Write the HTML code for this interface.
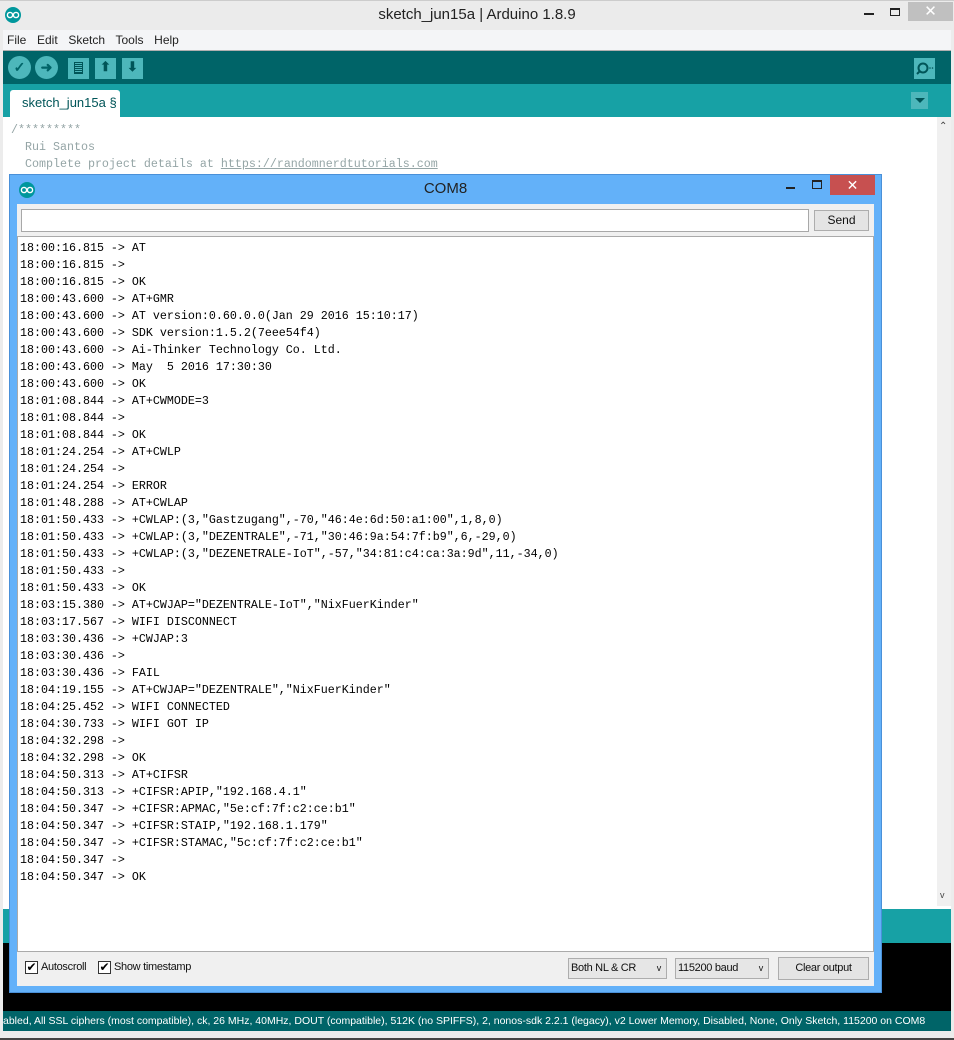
<!DOCTYPE html>
<html><head><meta charset="utf-8"><style>
*{margin:0;padding:0;box-sizing:border-box}
body{width:954px;height:1040px;overflow:hidden;background:#fff;font-family:"Liberation Sans",sans-serif;position:relative}
.abs{position:absolute}
.mono{font-family:"Liberation Mono",monospace}
</style></head><body>
<div class="abs" style="left:0;top:0;width:954px;height:30px;background:#ebebeb;border-top:1px solid #ccc"></div>
<svg class="abs" style="left:5px;top:7px" width="16" height="16"><circle cx="8" cy="8" r="8" fill="#00979c"/><circle cx="5" cy="8" r="2.6" fill="none" stroke="#fff" stroke-width="1.4"/><circle cx="11" cy="8" r="2.6" fill="none" stroke="#fff" stroke-width="1.4"/></svg>
<div class="abs" style="left:0;width:954px;top:6px;text-align:center;font-size:15px;color:#222">sketch_jun15a | Arduino 1.8.9</div>
<div class="abs" style="left:864px;top:13px;width:10px;height:2px;background:#222"></div>
<div class="abs" style="left:890px;top:8px;width:10px;height:8px;border:1px solid #222;border-top-width:2px"></div>
<div class="abs" style="left:908px;top:2px;width:45px;height:19px;background:#c0c0c0;color:#fff;text-align:center;font-size:15px;line-height:19px">✕</div>
<div class="abs" style="left:3px;top:30px;width:948px;height:21px;background:#f4f5f7;border-bottom:1px solid #b0b0b0;font-size:12px;color:#222;line-height:21px;padding-left:4px;word-spacing:2px">File&nbsp; Edit&nbsp; Sketch&nbsp; Tools&nbsp; Help</div>
<div class="abs" style="left:3px;top:51px;width:948px;height:33px;background:#006468"></div>
<div class="abs" style="left:8px;top:56px;width:23px;height:23px;border-radius:50%;background:#4db7bb;color:#006468;font-size:14px;text-align:center;line-height:23px;font-weight:bold">✓</div>
<div class="abs" style="left:35px;top:56px;width:23px;height:23px;border-radius:50%;background:#4db7bb;color:#006468;font-size:14px;text-align:center;line-height:22px;font-weight:bold">➜</div>
<div class="abs" style="left:68px;top:58px;width:21px;height:21px;background:#4db7bb"><div style="position:absolute;left:6px;top:4px;width:9px;height:12px;border:1px solid #005558;background:repeating-linear-gradient(#4db7bb 0 1px,#005558 1px 2px)"></div></div>
<div class="abs" style="left:95px;top:58px;width:21px;height:21px;background:#4db7bb;color:#005558;text-align:center;font-size:13px;line-height:18px;font-weight:bold">⬆</div>
<div class="abs" style="left:122px;top:58px;width:21px;height:21px;background:#4db7bb;color:#005558;text-align:center;font-size:13px;line-height:18px;font-weight:bold">⬇</div>
<div class="abs" style="left:914px;top:58px;width:21px;height:21px;background:#4db7bb"><svg width="21" height="21"><circle cx="9" cy="10" r="4.5" fill="none" stroke="#005558" stroke-width="2"/><line x1="6" y1="13" x2="3" y2="16" stroke="#005558" stroke-width="2"/><circle cx="16" cy="10" r=".8" fill="#005558"/><circle cx="18.5" cy="10" r=".8" fill="#005558"/></svg></div>
<div class="abs" style="left:3px;top:84px;width:948px;height:33px;background:#17a1a5"></div>
<div class="abs" style="left:10px;top:90px;width:110px;height:27px;background:#fff;border-radius:3px 3px 0 0;color:#005558;font-size:13px;line-height:25px;padding-left:12px">sketch_jun15a §</div>
<div class="abs" style="left:911px;top:92px;width:17px;height:17px;background:#4db7bb"><div style="position:absolute;left:4px;top:6px;border-left:5px solid transparent;border-right:5px solid transparent;border-top:5px solid #005558"></div></div>
<div class="abs mono" style="left:11px;top:122px;font-size:11.67px;line-height:17px;color:#95a5a6;white-space:pre">/*********
  Rui Santos
  Complete project details at <u>https://randomnerdtutorials.com</u></div>
<div class="abs" style="left:937px;top:117px;width:14px;height:789px;background:#f0f0f0"></div>
<div class="abs" style="left:939px;top:121px;font-size:10px;color:#444">⌃</div>
<div class="abs" style="left:940px;top:890px;font-size:9px;color:#444">v</div>
<div class="abs" style="left:3px;top:909px;width:948px;height:34px;background:#17a1a5"></div>
<div class="abs" style="left:3px;top:943px;width:948px;height:68px;background:#000"></div>
<div class="abs" style="left:3px;top:1011px;width:948px;height:20px;background:#006468;color:#fff;font-size:10.5px;line-height:20px;white-space:nowrap;overflow:hidden">abled, All SSL ciphers (most compatible), ck, 26 MHz, 40MHz, DOUT (compatible), 512K (no SPIFFS), 2, nonos-sdk 2.2.1 (legacy), v2 Lower Memory, Disabled, None, Only Sketch, 115200 on COM8</div>
<div class="abs" style="left:0;top:1031px;width:954px;height:9px;background:#ececec;border-bottom:2px solid #444"></div>
<div class="abs" style="left:0;top:30px;width:3px;height:1001px;background:#ececec"></div>
<div class="abs" style="left:951px;top:30px;width:3px;height:1001px;background:#ececec"></div>

<div class="abs" style="left:9px;top:174px;width:873px;height:819px;background:#63b1f9;border:1px solid #4a90d8"></div>
<svg class="abs" style="left:19px;top:182px" width="16" height="16"><circle cx="8" cy="8" r="8" fill="#00979c"/><circle cx="5" cy="8" r="2.6" fill="none" stroke="#fff" stroke-width="1.4"/><circle cx="11" cy="8" r="2.6" fill="none" stroke="#fff" stroke-width="1.4"/></svg>
<div class="abs" style="left:9px;width:873px;top:180px;text-align:center;font-size:15px;color:#222">COM8</div>
<div class="abs" style="left:786px;top:187px;width:9px;height:2px;background:#222"></div>
<div class="abs" style="left:812px;top:180px;width:10px;height:9px;border:1px solid #222;border-top-width:2px"></div>
<div class="abs" style="left:830px;top:175px;width:45px;height:20px;background:#c75050;color:#fff;text-align:center;font-size:14px;line-height:20px">✕</div>
<div class="abs" style="left:17px;top:204px;width:857px;height:782px;background:#f0f0f0"></div>
<div class="abs" style="left:21px;top:209px;width:788px;height:23px;background:#fff;border:1px solid #a8a8a8"></div>
<div class="abs" style="left:814px;top:210px;width:55px;height:21px;background:#e4e4e4;border:1px solid #adadad;font-size:12px;text-align:center;line-height:19px;color:#111">Send</div>
<div class="abs" style="left:17px;top:236px;width:857px;height:716px;background:#fff;border:1px solid #aaa"></div>
<div class="abs mono" style="left:20px;top:240px;font-size:11.67px;line-height:17px;color:#000;white-space:pre">18:00:16.815 -&gt; AT
18:00:16.815 -&gt; 
18:00:16.815 -&gt; OK
18:00:43.600 -&gt; AT+GMR
18:00:43.600 -&gt; AT version:0.60.0.0(Jan 29 2016 15:10:17)
18:00:43.600 -&gt; SDK version:1.5.2(7eee54f4)
18:00:43.600 -&gt; Ai-Thinker Technology Co. Ltd.
18:00:43.600 -&gt; May  5 2016 17:30:30
18:00:43.600 -&gt; OK
18:01:08.844 -&gt; AT+CWMODE=3
18:01:08.844 -&gt; 
18:01:08.844 -&gt; OK
18:01:24.254 -&gt; AT+CWLP
18:01:24.254 -&gt; 
18:01:24.254 -&gt; ERROR
18:01:48.288 -&gt; AT+CWLAP
18:01:50.433 -&gt; +CWLAP:(3,"Gastzugang",-70,"46:4e:6d:50:a1:00",1,8,0)
18:01:50.433 -&gt; +CWLAP:(3,"DEZENTRALE",-71,"30:46:9a:54:7f:b9",6,-29,0)
18:01:50.433 -&gt; +CWLAP:(3,"DEZENETRALE-IoT",-57,"34:81:c4:ca:3a:9d",11,-34,0)
18:01:50.433 -&gt; 
18:01:50.433 -&gt; OK
18:03:15.380 -&gt; AT+CWJAP="DEZENTRALE-IoT","NixFuerKinder"
18:03:17.567 -&gt; WIFI DISCONNECT
18:03:30.436 -&gt; +CWJAP:3
18:03:30.436 -&gt; 
18:03:30.436 -&gt; FAIL
18:04:19.155 -&gt; AT+CWJAP="DEZENTRALE","NixFuerKinder"
18:04:25.452 -&gt; WIFI CONNECTED
18:04:30.733 -&gt; WIFI GOT IP
18:04:32.298 -&gt; 
18:04:32.298 -&gt; OK
18:04:50.313 -&gt; AT+CIFSR
18:04:50.313 -&gt; +CIFSR:APIP,"192.168.4.1"
18:04:50.347 -&gt; +CIFSR:APMAC,"5e:cf:7f:c2:ce:b1"
18:04:50.347 -&gt; +CIFSR:STAIP,"192.168.1.179"
18:04:50.347 -&gt; +CIFSR:STAMAC,"5c:cf:7f:c2:ce:b1"
18:04:50.347 -&gt; 
18:04:50.347 -&gt; OK</div>
<div class="abs" style="left:25px;top:961px;width:13px;height:13px;border:1px solid #333;background:#fff;font-size:12px;line-height:11px;text-align:center">✔</div>
<div class="abs" style="left:41px;top:961px;font-size:11px;color:#111;letter-spacing:-0.3px">Autoscroll</div>
<div class="abs" style="left:98px;top:961px;width:13px;height:13px;border:1px solid #333;background:#fff;font-size:12px;line-height:11px;text-align:center">✔</div>
<div class="abs" style="left:114px;top:961px;font-size:11px;color:#111;letter-spacing:-0.3px">Show timestamp</div>
<div class="abs" style="left:568px;top:958px;width:99px;height:21px;background:#e6e6e6;border:1px solid #adadad;font-size:11px;line-height:19px;padding-left:2px;color:#111;letter-spacing:-0.3px">Both NL &amp; CR<span style="position:absolute;right:5px;font-size:9px">v</span></div>
<div class="abs" style="left:675px;top:958px;width:94px;height:21px;background:#e6e6e6;border:1px solid #adadad;font-size:11px;line-height:19px;padding-left:2px;color:#111;letter-spacing:-0.3px">115200 baud<span style="position:absolute;right:5px;font-size:9px">v</span></div>
<div class="abs" style="left:778px;top:957px;width:91px;height:23px;background:#e4e4e4;border:1px solid #adadad;font-size:11px;line-height:21px;text-align:center;color:#111;letter-spacing:-0.3px">Clear output</div>
</body></html>
